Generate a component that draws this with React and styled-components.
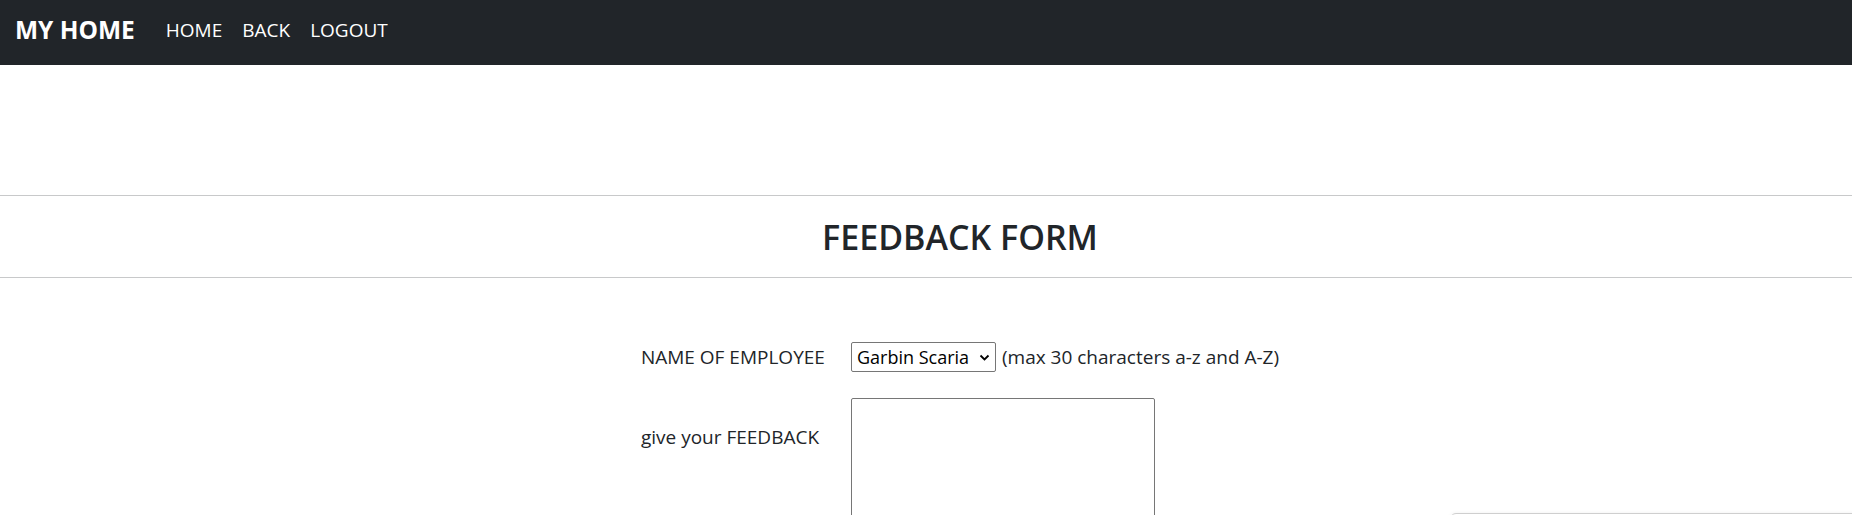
import styled, { createGlobalStyle } from "styled-components";

const GlobalStyle = createGlobalStyle`
  body {
    margin: 0;
    background: #fff;
    color: #212529;
    font-family: "Open Sans", "Noto Sans", sans-serif;
  }
`;

const Navbar = styled.nav`
  height: 65px;
  background: #212529;
  display: flex;
  align-items: center;
  padding: 0 16px 6px 15px;
  box-sizing: border-box;
`;

const Brand = styled.a`
  color: #fff;
  font-size: 24.5px;
  font-weight: 700;
  text-decoration: none;
  margin-right: 31px;
`;

const NavLinks = styled.div`
  display: flex;
  gap: 20px;
`;

const NavLink = styled.a`
  color: #fff;
  font-size: 19px;
  text-decoration: none;
`;

const Main = styled.main`
  padding-top: 130px;
`;

const TitleBar = styled.div`
  border-top: 1px solid #c8c9ca;
  border-bottom: 1px solid #c8c9ca;
  height: 83px;
  display: flex;
  align-items: center;
  justify-content: center;
  padding-left: 68px;
  box-sizing: border-box;
`;

const Title = styled.h2`
  margin: 0;
  font-size: 34px;
  font-weight: 600;
`;

const FormGrid = styled.form`
  display: grid;
  grid-template-columns: 210px auto;
  row-gap: 26px;
  justify-content: center;
  padding-left: 68px;
  margin-top: 64px;
`;

const Label = styled.label`
  font-size: 19px;
  align-self: ${(p) => (p.$top ? "start" : "center")};
  margin-top: ${(p) => (p.$top ? "26px" : "0")};
`;

const Field = styled.div`
  display: flex;
  align-items: center;
  gap: 6px;
`;

const SelectWrap = styled.div`
  position: relative;
  display: inline-flex;
`;

const Select = styled.select`
  appearance: none;
  width: 145px;
  height: 30px;
  box-sizing: border-box;
  border: 1px solid #767676;
  border-radius: 2px;
  background: #fff;
  color: #000;
  font-family: inherit;
  font-size: 18px;
  padding: 0 20px 0 5px;
`;

const Chevron = styled.svg`
  position: absolute;
  right: 6px;
  top: 12px;
  pointer-events: none;
`;

const Hint = styled.span`
  font-size: 19px;
`;

const TextArea = styled.textarea`
  width: 304px;
  height: 140px;
  box-sizing: border-box;
  border: 1px solid #767676;
  border-radius: 2px;
`;

const Toast = styled.div`
  position: fixed;
  left: 1450px;
  top: 513px;
  width: 440px;
  height: 120px;
  border: 1px solid #cfcfcf;
  border-radius: 6px;
  background: #fff;
  box-shadow: 0 0 4px rgba(0, 0, 0, 0.06);
`;

export default function App() {
  return (
    <>
      <GlobalStyle />
      <Navbar>
        <Brand href="#">MY HOME</Brand>
        <NavLinks>
          <NavLink href="#">HOME</NavLink>
          <NavLink href="#">BACK</NavLink>
          <NavLink href="#">LOGOUT</NavLink>
        </NavLinks>
      </Navbar>
      <Main>
        <TitleBar>
          <Title>FEEDBACK FORM</Title>
        </TitleBar>
        <FormGrid>
          <Label>NAME OF EMPLOYEE</Label>
          <Field>
            <SelectWrap>
              <Select defaultValue="Garbin Scaria">
                <option>Garbin Scaria</option>
              </Select>
              <Chevron width="11" height="7" viewBox="0 0 11 7">
                <path d="M1.5 1.5 L5.5 5.5 L9.5 1.5" fill="none" stroke="#000" strokeWidth="1.8" />
              </Chevron>
            </SelectWrap>
            <Hint>(max 30 characters a-z and A-Z)</Hint>
          </Field>
          <Label $top>give your FEEDBACK</Label>
          <Field>
            <TextArea />
          </Field>
        </FormGrid>
      </Main>
      <Toast />
    </>
  );
}
